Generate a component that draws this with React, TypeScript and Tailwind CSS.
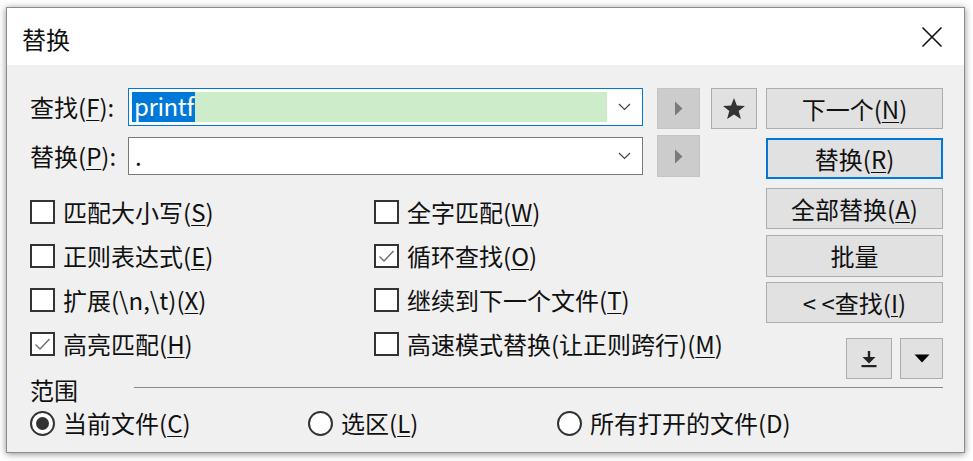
import { FC, ReactNode } from 'react';

const FONT = { fontFamily: '"Noto Sans CJK SC", "Noto Sans", sans-serif' };

// 助记符の下線付きラベル
const Mn: FC<{ before: string; key_: string; after?: string }> = ({ before, key_, after = ')' }) => (
  <span>
    {before}
    <span className="underline underline-offset-[3px] decoration-1">{key_}</span>
    {after}
  </span>
);

const Chevron = () => (
  <svg width="13" height="8" viewBox="0 0 13 8">
    <polyline points="1,1 6.5,6.5 12,1" fill="none" stroke="#444" strokeWidth="1.2" />
  </svg>
);

const ArrowButton: FC<{ className?: string }> = ({ className = '' }) => (
  <div
    className={`w-[43px] bg-[#cccccc] border border-[#c4c4c4] flex items-center justify-center ${className}`}
  >
    <svg width="9" height="15" viewBox="0 0 9 15">
      <polygon points="1,0.5 8.5,7.5 1,14.5" fill="#7a7a7a" />
    </svg>
  </div>
);

const Btn: FC<{ children: ReactNode; className?: string; focused?: boolean }> = ({
  children,
  className = '',
  focused
}) => (
  <div
    className={`w-[177px] bg-[#e1e1e1] flex items-center justify-center text-[24px] leading-none text-[#111] ${
      focused ? 'border-2 border-[#0078d7]' : 'border border-[#adadad]'
    } ${className}`}
  >
    {children}
  </div>
);

const Check: FC<{ checked?: boolean; children: ReactNode }> = ({ checked, children }) => (
  <div className="h-[44px] flex items-center">
    <div className="w-[25px] h-[24px] border-2 border-[#333] bg-white flex items-center justify-center">
      {checked && (
        <svg width="17" height="14" viewBox="0 0 17 14">
          <polyline points="1.5,7.5 6,12 15.5,2" fill="none" stroke="#6d6d6d" strokeWidth="1.4" />
        </svg>
      )}
    </div>
    <span className="ml-[8px] text-[24px] leading-none text-[#111] whitespace-nowrap">{children}</span>
  </div>
);

const Radio: FC<{ checked?: boolean; children: ReactNode; className?: string }> = ({
  checked,
  children,
  className = ''
}) => (
  <div className={`flex items-center ${className}`}>
    <div className="w-[25px] h-[25px] rounded-full border-2 border-[#333] bg-white flex items-center justify-center">
      {checked && <div className="w-[13px] h-[13px] rounded-full bg-[#333]" />}
    </div>
    <span className="ml-[8px] text-[24px] leading-none text-[#111] whitespace-nowrap">{children}</span>
  </div>
);

export default function App() {
  return (
    <div className="w-[973px] h-[461px] bg-white overflow-hidden" style={FONT}>
      <div className="ml-[6px] mt-[7px] w-[959px] h-[446px] border border-[#8c8c8c] shadow-[0_1px_7px_rgba(0,0,0,0.45)] flex flex-col">
        {/* タイトルバー */}
        <div className="h-[57px] bg-white flex items-center justify-between pl-[15px] pr-[21px] shrink-0">
          <span className="text-[24px] leading-none text-[#111] pt-[4px]">替换</span>
          <svg width="22" height="22" viewBox="0 0 22 22">
            <path d="M1.5 1.5 L20.5 20.5 M20.5 1.5 L1.5 20.5" stroke="#111" strokeWidth="1.6" />
          </svg>
        </div>

        {/* 本体 */}
        <div className="flex-1 bg-[#f0f0f0] pl-[23px] pr-[21px] pt-[23px]">
          <div className="flex items-start">
            <div className="flex flex-col">
              {/* 検索 */}
              <div className="flex items-start">
                <div className="w-[98px] h-[38px] flex items-center text-[24px] leading-none text-[#111]">
                  <Mn before="查找(" key_="F" after="):" />
                </div>
                <div className="w-[515px] h-[38px] border border-[#0078d7] bg-white flex items-center pl-[3px]">
                  <div className="h-[30px] bg-[#0078d7] text-white text-[24px] leading-[28px] pl-[2px] pr-[1px] whitespace-nowrap tracking-[-0.4px]">
                    printf
                  </div>
                  <div className="h-[30px] flex-1 bg-[#cdecc9]" />
                  <div className="w-[35px] flex items-center justify-center">
                    <Chevron />
                  </div>
                </div>
                <ArrowButton className="ml-[14px] h-[41px]" />
                <div className="ml-[11px] w-[46px] h-[41px] bg-[#e1e1e1] border border-[#adadad] flex items-center justify-center">
                  <svg width="24" height="23" viewBox="0 0 24 23">
                    <polygon
                      points="12,1 14.9,8.6 23,8.9 16.7,14 18.9,21.9 12,17.4 5.1,21.9 7.3,14 1,8.9 9.1,8.6"
                      fill="#333"
                    />
                  </svg>
                </div>
              </div>

              {/* 置換 */}
              <div className="flex items-center mt-[6px]">
                <div className="w-[98px] h-[38px] flex items-center text-[24px] leading-none text-[#111]">
                  <Mn before="替换(" key_="P" after="):" />
                </div>
                <div className="w-[515px] h-[38px] border border-[#7a7a7a] bg-white flex items-center pl-[6px]">
                  <span className="text-[24px] leading-none text-[#111] flex-1">.</span>
                  <div className="w-[35px] flex items-center justify-center">
                    <Chevron />
                  </div>
                </div>
                <ArrowButton className="ml-[14px] h-[42px]" />
              </div>

              {/* オプション */}
              <div className="grid grid-cols-[344px_1fr] mt-[13px]">
                <Check>
                  <Mn before="匹配大小写(" key_="S" />
                </Check>
                <Check>
                  <Mn before="全字匹配(" key_="W" />
                </Check>
                <Check>
                  <Mn before="正则表达式(" key_="E" />
                </Check>
                <Check checked>
                  <Mn before="循环查找(" key_="O" />
                </Check>
                <Check>
                  <Mn before="扩展(\n,\t)(" key_="X" />
                </Check>
                <Check>
                  <Mn before="继续到下一个文件(" key_="T" />
                </Check>
                <Check checked>
                  <Mn before="高亮匹配(" key_="H" />
                </Check>
                <Check>
                  <Mn before="高速模式替换(让正则跨行)(" key_="M" />
                </Check>
              </div>
            </div>

            {/* 右側ボタン */}
            <div className="ml-[9px] flex flex-col">
              <Btn className="h-[41px]">
                <Mn before="下一个(" key_="N" />
              </Btn>
              <Btn focused className="h-[41px] mt-[9px]">
                <Mn before="替换(" key_="R" />
              </Btn>
              <Btn className="h-[41px] mt-[9px]">
                <Mn before="全部替换(" key_="A" />
              </Btn>
              <Btn className="h-[42px] mt-[6px]">批量</Btn>
              <Btn className="h-[41px] mt-[5px]">
                <Mn before="< <查找(" key_="I" />
              </Btn>
              <div className="flex justify-end gap-[8px] mt-[15px]">
                <div className="w-[46px] h-[41px] bg-[#e1e1e1] border border-[#adadad] flex items-center justify-center">
                  <svg width="18" height="18" viewBox="0 0 18 18">
                    <rect x="7.8" y="1" width="2.4" height="7" fill="#222" />
                    <polygon points="2.5,7 15.5,7 9,13.5" fill="#222" />
                    <rect x="1.5" y="15" width="15" height="2.2" fill="#222" />
                  </svg>
                </div>
                <div className="w-[43px] h-[41px] bg-[#e1e1e1] border border-[#adadad] flex items-center justify-center">
                  <svg width="16" height="9" viewBox="0 0 16 9">
                    <polygon points="0.5,0.5 15.5,0.5 8,8.5" fill="#000" />
                  </svg>
                </div>
              </div>
            </div>
          </div>

          {/* 範囲 */}
          <div className="flex items-start h-[28px] -mt-[3px]">
            <span className="w-[104px] text-[24px] leading-[28px] text-[#111]">范围</span>
            <div className="flex-1 mt-[11px] border-t border-[#8a8a8a]" />
          </div>
          <div className="flex items-center h-[38px]">
            <Radio checked className="w-[278px]">
              <Mn before="当前文件(" key_="C" />
            </Radio>
            <Radio className="w-[249px]">
              <Mn before="选区(" key_="L" />
            </Radio>
            <Radio>所有打开的文件(D)</Radio>
          </div>
        </div>
      </div>
    </div>
  );
}
